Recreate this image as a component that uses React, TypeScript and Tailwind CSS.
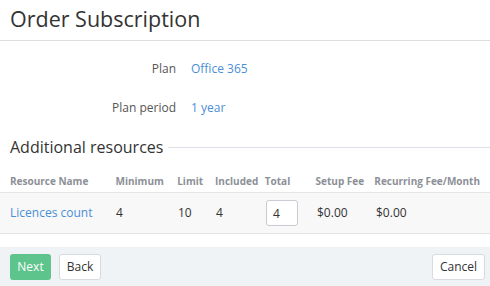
export default function App(): JSX.Element {
  const cols = [
    { label: "Resource Name", w: "w-[106px]" },
    { label: "Minimum", w: "w-[62px]" },
    { label: "Limit", w: "w-[38px]" },
    { label: "Included", w: "w-[50px]" },
    { label: "Total", w: "w-[51px]" },
    { label: "Setup Fee", w: "w-[59px]" },
    { label: "Recurring Fee/Month", w: "flex-1" },
  ];

  return (
    <div className="w-[490px] h-[286px] bg-white font-['Open_Sans',sans-serif] text-[#333] flex flex-col overflow-hidden">
      <div className="h-[41px] border-b border-[#dddddd] px-[10px] flex items-center">
        <h1 className="text-[21.5px] leading-none text-[#333] mt-[-3px]">Order Subscription</h1>
      </div>

      <div className="flex flex-col gap-[27px] pt-[22px] text-[12px]">
        <div className="flex items-center h-[12px]">
          <span className="w-[176px] text-right text-[#555]">Plan</span>
          <span className="ml-[15px] text-[#4a8fd6]">Office 365</span>
        </div>
        <div className="flex items-center h-[12px]">
          <span className="w-[176px] text-right text-[#555]">Plan period</span>
          <span className="ml-[15px] text-[#4a8fd6]">1 year</span>
        </div>
      </div>

      <div className="flex items-center px-[10px] mt-[25px]">
        <h2 className="text-[16px] leading-none text-[#333]">Additional resources</h2>
        <div className="flex-1 border-t border-[#dde2e8] ml-[5px] mr-[-10px]" />
      </div>

      <div className="mt-[16px]">
        <div className="flex items-center h-[22px] border-b border-[#e5e5e5] pl-[10px] pr-[10px] text-[10px] font-bold text-[#8c9097] whitespace-nowrap">
          {cols.map((c) => (
            <span key={c.label} className={c.w}>
              {c.label}
            </span>
          ))}
        </div>
        <div className="flex items-center h-[41px] bg-[#f8f8f8] border-b border-[#e5e5e5] px-[10px] text-[12px]">
          <span className="w-[106px] text-[#4a8fd6]">Licences count</span>
          <span className="w-[62px]">4</span>
          <span className="w-[38px]">10</span>
          <span className="w-[50px]">4</span>
          <span className="w-[51px]">
            <input
              defaultValue="4"
              className="w-[32px] h-[26px] bg-white border border-[#c8ccd2] rounded-[3px] px-[6px] text-[12px] text-[#333] outline-none"
            />
          </span>
          <span className="w-[59px]">$0.00</span>
          <span className="flex-1">$0.00</span>
        </div>
      </div>

      <div className="mt-auto h-[39px] bg-[#f0f3f6] flex items-center px-[10px] text-[12px]">
        <button className="h-[26px] w-[41px] rounded-[3px] bg-[#5dc48c] text-white">Next</button>
        <button className="ml-[8px] h-[26px] w-[42px] rounded-[3px] bg-white border border-[#d8dbe0] text-[#333]">
          Back
        </button>
        <button className="ml-auto mr-[-5px] h-[26px] w-[53px] rounded-[3px] bg-white border border-[#d8dbe0] text-[#333]">
          Cancel
        </button>
      </div>
    </div>
  );
}
